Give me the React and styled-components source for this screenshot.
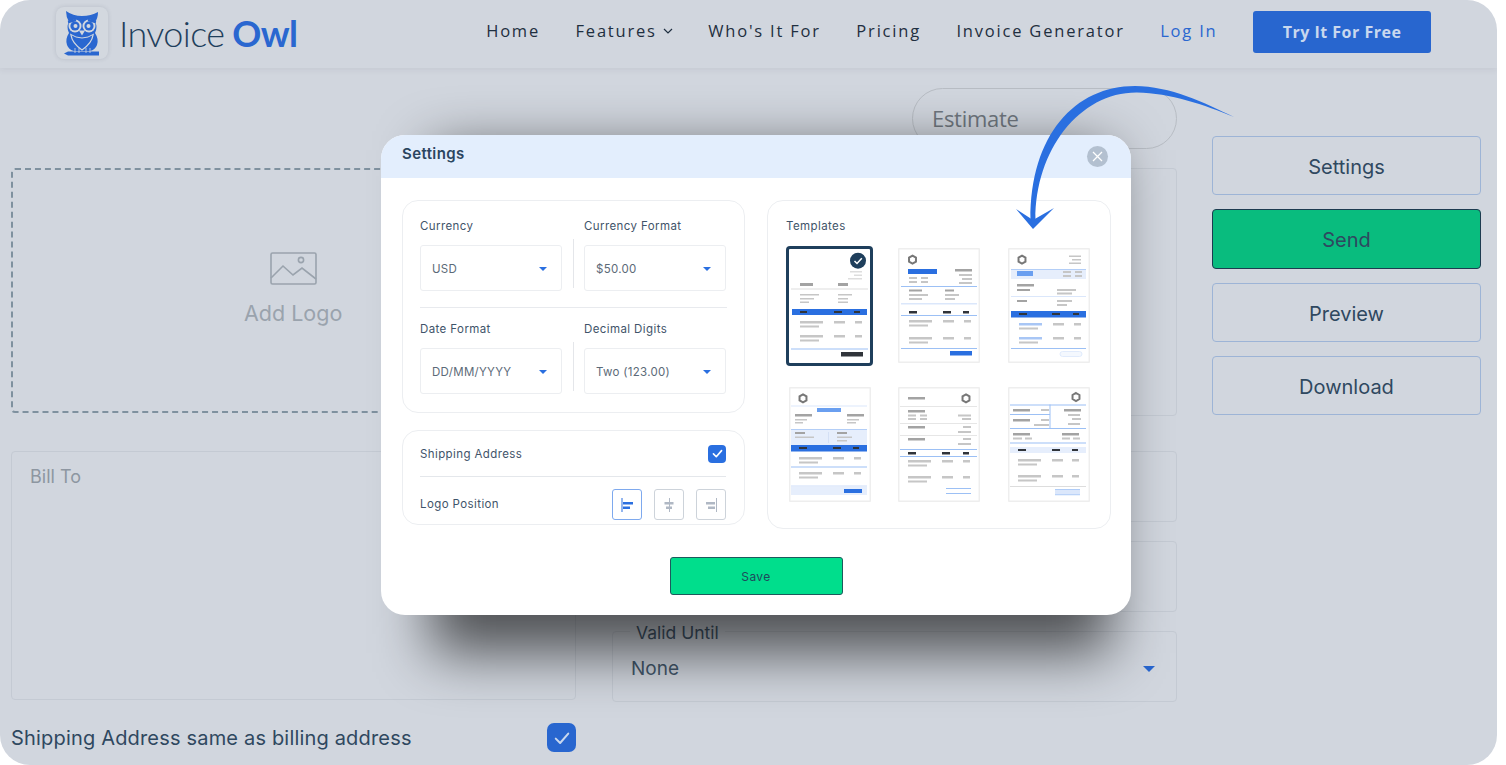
import React from 'react';
import styled, { createGlobalStyle } from 'styled-components';

const GlobalStyle = createGlobalStyle`
    html, body {
        margin: 0;
        background: #fff;
        overflow: hidden;
    }
    * {
        box-sizing: border-box;
    }
`;

const Frame = styled.div`
    position: relative;
    width: 1497px;
    height: 765px;
    background: #d1d6de;
    border-radius: 30px;
    overflow: hidden;
    font-family: Inter, 'Noto Sans', sans-serif;
    color: #2f4860;
`;

const Header = styled.header`
    height: 68px;
    display: flex;
    align-items: center;
    justify-content: space-between;
    padding: 0 66px 4px 56px;
    box-shadow: 0 2px 6px rgba(60, 70, 90, 0.08);
`;

const Brand = styled.div`
    display: flex;
    align-items: center;
    gap: 11px;
    margin-top: 1px;
`;

const LogoBox = styled.div`
    width: 52px;
    height: 52px;
    border-radius: 8px;
    background: #d3d8df;
    box-shadow: 0 0 4px rgba(60, 70, 90, 0.16);
`;

const BrandName = styled.div`
    font-family: Lato, sans-serif;
    font-size: 36px;
    font-weight: 300;
    letter-spacing: -0.6px;
    word-spacing: -1.5px;
    color: #1f3f5c;
    b {
        font-weight: 700;
        color: #2a67d0;
    }
`;

const Nav = styled.nav`
    display: flex;
    align-items: center;
    gap: 35.5px;
`;

const NavLink = styled.a`
    display: flex;
    align-items: center;
    gap: 6px;
    padding-bottom: 3px;
    font-family: 'Open Sans', sans-serif;
    font-size: 16.5px;
    letter-spacing: 1.8px;
    color: ${(p) => (p.$accent ? '#2a67d0' : '#1f2f40')};
`;

const TryButton = styled.button`
    width: 178px;
    height: 42px;
    border: 0;
    border-radius: 3px;
    background: #2866cf;
    color: #c9d8ee;
    font-family: 'Open Sans', sans-serif;
    font-size: 16px;
    font-weight: 700;
    letter-spacing: 0.5px;
`;

const Columns = styled.main`
    display: grid;
    grid-template-columns: 566px 565px 269px;
    column-gap: 35px;
    padding-left: 11px;
`;

const Column = styled.section`
    display: flex;
    flex-direction: column;
    padding-top: ${(p) => p.$top}px;
    padding-right: ${(p) => p.$right || 0}px;
`;

const LogoDrop = styled.div`
    height: 245px;
    border: 2px dashed #7f919f;
    border-radius: 4px;
    margin-bottom: 38px;
    padding: 82px 0 0 231px;
    font-size: 21.5px;
    color: #9aa3ad;
    svg {
        display: block;
        margin: 0 0 15px 26px;
    }
`;

const BillTo = styled.div`
    height: 249px;
    border: 1px solid #c4cad3;
    border-radius: 4px;
    padding: 14px 18px;
    font-size: 18px;
    color: #8d96a1;
`;

const SameRow = styled.div`
    display: flex;
    align-items: center;
    justify-content: space-between;
    margin-top: 23px;
    font-size: 20px;
    letter-spacing: 0.18px;
`;

const BigCheck = styled.span`
    width: 29px;
    height: 29px;
    border-radius: 7px;
    background: #2866cf;
    display: flex;
    align-items: center;
    justify-content: center;
`;

const Pill = styled.div`
    align-self: flex-end;
    width: 265px;
    height: 61px;
    margin-bottom: 19px;
    border: 1px solid #b8bdc4;
    border-radius: 31px;
    padding: 0 20px 2px 19px;
    display: flex;
    align-items: center;
    font-family: 'Open Sans', sans-serif;
    font-size: 22px;
    letter-spacing: -0.3px;
    color: #6f767e;
`;

const Panel = styled.div`
    height: 248px;
    margin-bottom: 35px;
    border: 1px solid #c4cad3;
    border-radius: 4px;
`;

const Field = styled.div`
    position: relative;
    height: 71px;
    margin-bottom: ${(p) => p.$gap}px;
    border: 1px solid #c4cad3;
    border-radius: 4px;
    padding: 4px 21px 0 18px;
    display: flex;
    align-items: center;
    justify-content: space-between;
    font-size: 19px;
    color: #44586c;
`;

const FieldLabel = styled.span`
    position: absolute;
    left: 17px;
    top: -10px;
    padding: 0 6px;
    background: #d1d6de;
    font-size: 17.5px;
`;

const Caret = styled.span`
    width: 0;
    height: 0;
    border-left: ${(p) => p.$size}px solid transparent;
    border-right: ${(p) => p.$size}px solid transparent;
    border-top: ${(p) => p.$size}px solid ${(p) => p.$color};
`;

const Actions = styled.aside`
    display: flex;
    flex-direction: column;
    gap: 14px;
`;

const ActionButton = styled.button`
    height: 59.3px;
    padding-top: 4px;
    border-radius: 4px;
    border: 1px solid ${(p) => (p.$primary ? '#1d3b50' : '#9db4d6')};
    background: ${(p) => (p.$primary ? '#09bc7e' : 'transparent')};
    color: #2f4860;
    font-family: Inter, sans-serif;
    font-size: 20px;
`;

const ModalLayer = styled.div`
    position: absolute;
    left: 381px;
    top: 135px;
    width: 750px;
    height: 480px;
`;

const ModalShadow = styled.div`
    position: absolute;
    inset: 15px 20px -38px 50px;
    background: rgba(0, 0, 0, 0.62);
    filter: blur(28px);
`;

const Modal = styled.div`
    position: relative;
    height: 100%;
    background: #fff;
    border-radius: 24px;
    overflow: hidden;
`;

const ModalHeader = styled.div`
    height: 43px;
    background: #e3eefd;
    display: flex;
    align-items: center;
    justify-content: space-between;
    padding: 0 23px 6px 21px;
    font-size: 15px;
    font-weight: 600;
    letter-spacing: 0.4px;
    color: #2b4560;
`;

const CloseButton = styled.span`
    width: 21px;
    height: 21px;
    margin-top: 6px;
    border-radius: 50%;
    background: #b3c0d0;
    display: flex;
    align-items: center;
    justify-content: center;
`;

const ModalBody = styled.div`
    display: grid;
    grid-template-columns: 343px 344px;
    column-gap: 22px;
    padding: 22px 20px 0 21px;
`;

const Stack = styled.div`
    display: flex;
    flex-direction: column;
    gap: 17px;
`;

const Card = styled.div`
    height: ${(p) => p.$height}px;
    border: 1px solid #eceef1;
    border-radius: 16px;
    padding: ${(p) => p.$pad};
`;

const SelectRow = styled.div`
    display: grid;
    grid-template-columns: 142px 1px 142px;
    column-gap: 10.5px;
    padding-bottom: 16px;
    border-bottom: ${(p) => (p.$last ? '0' : '1px solid #e8eaee')};
    margin-bottom: 14px;
`;

const Divider = styled.div`
    background: #e4e6ea;
    height: 49px;
    margin-top: 20px;
`;

const SelectLabel = styled.div`
    font-size: 11.5px;
    letter-spacing: 0.4px;
    line-height: 14px;
    color: #3f546a;
    margin-bottom: 12px;
`;

const SelectBox = styled.div`
    height: 46px;
    border: 1px solid #eceef1;
    border-radius: 3px;
    padding: 2px 14px 0 11px;
    display: flex;
    align-items: center;
    justify-content: space-between;
    font-size: 11.5px;
    letter-spacing: 0.3px;
    color: #5c6a78;
`;

const OptionRow = styled.div`
    display: flex;
    align-items: center;
    justify-content: space-between;
    height: ${(p) => p.$height}px;
    font-size: 11.5px;
    letter-spacing: 0.4px;
    color: #3f546a;
    border-bottom: ${(p) => (p.$line ? '1px solid #e4e7eb' : '0')};
`;

const SmallCheck = styled.span`
    width: 18px;
    height: 18px;
    border-radius: 4px;
    background: #2a6fe0;
    display: flex;
    align-items: center;
    justify-content: center;
`;

const PositionGroup = styled.div`
    display: flex;
    gap: 12px;
`;

const PositionButton = styled.span`
    width: 30px;
    height: 31px;
    border-radius: 3px;
    border: 1px solid ${(p) => (p.$active ? '#7ea9ee' : '#cdd3da')};
    svg {
        display: block;
    }
`;

const TemplatesTitle = styled.div`
    font-size: 11.5px;
    letter-spacing: 0.4px;
    color: #3f546a;
    margin-bottom: 13px;
`;

const TemplateGrid = styled.div`
    display: grid;
    grid-template-columns: 112px 110px 81px;
    grid-template-rows: 122px 112px;
    row-gap: 19px;
`;

const Thumb = styled.div`
    width: ${(p) => (p.$selected ? 87 : 82)}px;
    height: ${(p) => (p.$selected ? 120 : 115)}px;
    border-radius: ${(p) => (p.$selected ? 4 : 1)}px;
    background: #fff;
    box-shadow: inset 0 0 0 ${(p) => (p.$selected ? '3px #1f3f5c' : '1.5px #eeeeee')};
    margin-top: ${(p) => (p.$offsetTop ? 2 : 0)}px;
    margin-left: ${(p) => (p.$offsetLeft ? 3 : 0)}px;
    svg {
        display: block;
        filter: blur(0.35px);
    }
`;

const ModalFooter = styled.div`
    display: flex;
    justify-content: center;
    padding-top: 28px;
`;

const SaveButton = styled.button`
    width: 173px;
    height: 38px;
    padding-top: 2px;
    border: 1px solid #1d5a5c;
    border-radius: 3px;
    background: #00de8c;
    color: #1f4a5c;
    font-family: Inter, sans-serif;
    font-size: 12px;
    letter-spacing: 0.4px;
`;

const CurveArrow = styled.svg`
    position: absolute;
    left: 1000px;
    top: 70px;
`;

const BLUE = '#2a6fe0';
const SOFT = '#6a9ff0';
const LINE = '#9cc0f5';
const PALE = '#dbe7fb';
const BAND = '#e6eefc';
const DARK = '#30343a';
const G1 = '#a3a3a3';
const G2 = '#c6c6c6';
const G3 = '#dddddd';

const tableRows = (x, col2, col3, c1 = G2, ys = [72, 89]) =>
    ys.flatMap((y) => [
        [x, y, 23, 2.5, c1],
        [x, y + 4.5, 19, 2, G2],
        [col2, y, 11, 2.5, G2],
        [col3, y, 7, 2.5, G2],
    ]);

const TEMPLATES = [
    {
        selected: true,
        rects: [
            [64, 25, 12, 1.5, G3], [68, 28.5, 8, 1.5, G3], [62, 32, 14, 1.5, G3],
            [14, 37, 13, 3, G1], [52, 37, 10, 3, G1],
            [5, 42.5, 77, 1, G3],
            [14, 48, 19, 1.5, G2], [52, 48, 14, 1.5, G2],
            [14, 52, 14, 1.5, G2], [52, 52, 10, 1.5, G2],
            [14, 55.5, 9, 1.5, G2], [52, 55.5, 10, 1.5, G2],
            [6, 63, 75, 6, BLUE], [14, 65, 7, 2, DARK], [48, 65, 8, 2, DARK], [68, 65, 6, 2, DARK],
            ...tableRows(14, 48, 69, G2, [75, 89]),
            [5, 102.5, 77, 1, LINE],
            [55, 106, 22, 4.5, DARK],
        ],
    },
    {
        hex: [14.5, 11.7],
        rects: [
            [10, 21, 29, 5, BLUE], [57, 21, 17, 2.5, G1],
            [61, 26, 13, 2, G2], [64, 30, 10, 2, G2], [61, 34, 13, 2, G2],
            [11, 29, 8, 2, G2], [23, 29, 7, 2, G2], [11, 33, 8, 2, G2], [23, 33, 7, 2, G2],
            [3, 38, 76, 1, LINE],
            [11, 41.5, 13, 2, G1], [47, 41.5, 9, 2, G1],
            [11, 46, 19, 2, G2], [47, 46, 14, 2, G2],
            [11, 50, 13, 2, G2], [47, 50, 10, 2, G2],
            [3, 55, 76, 1.5, PALE],
            [11, 63, 8, 2.5, DARK], [45, 63, 8, 2.5, DARK], [65, 63, 6, 2.5, DARK],
            [3, 67, 76, 1, LINE],
            ...tableRows(11, 45, 66),
            [3, 100, 76, 1, LINE],
            [52, 103, 22, 4.5, BLUE],
        ],
    },
    {
        hex: [14, 11.7],
        rects: [
            [61, 7.5, 12, 1.5, G2], [64, 11, 9, 1.5, G2], [61, 14.5, 12, 1.5, G2],
            [3, 21, 75, 10, BAND], [3, 21, 75, 0.7, LINE],
            [9, 23, 16, 5, SOFT],
            [55, 23, 8, 2, G2], [67, 23, 7, 2, G2], [55, 27, 8, 2, G2], [67, 27, 7, 2, G2],
            [9, 36, 17, 2.5, G1], [9, 41, 13, 2, G1],
            [49, 41, 19, 2, G2], [49, 44.5, 15, 2, G2],
            [3, 48, 75, 1, PALE],
            [9, 52, 10, 2, G1], [49, 52, 15, 2, G2], [49, 56, 10, 2, G2],
            [3, 63, 75, 6.5, BLUE], [11, 65, 8, 2, DARK], [44, 65, 8, 2, DARK], [65, 65, 6, 2, DARK],
            ...tableRows(11, 45, 66, '#a8c6f5', [75, 89]),
            [3, 100, 75, 1, LINE],
        ],
        extra: <rect x="52" y="103.5" width="22" height="5" rx="2.5" fill="#f4f8fe" stroke={PALE} strokeWidth="0.8" />,
    },
    {
        hex: [14, 11.3],
        offsetLeft: true,
        rects: [
            [2, 18.5, 76, 1, PALE], [28, 21, 24, 4, SOFT],
            [6, 27, 17, 2.5, G1], [58, 27, 17, 2.5, G1],
            [6, 32, 12, 1.5, G2], [58, 32, 12, 1.5, G2],
            [6, 35, 8, 1.5, G2], [58, 35, 9, 1.5, G2],
            [2, 42, 76, 16, BAND], [2, 42, 76, 0.7, LINE],
            [6, 45, 10, 2, G1], [48, 45, 10, 2, G1],
            [6, 49.5, 19, 1.5, G2], [48, 49.5, 15, 1.5, G2], [48, 53, 10, 1.5, G2],
            [39, 45, 0.6, 11, '#c8d8f0'],
            [2, 58, 76, 6.5, BLUE], [10, 60, 8, 2, DARK], [44, 60, 8, 2, DARK], [64, 60, 6, 2, DARK],
            ...tableRows(10, 44, 65, G2, [70, 85]),
            [2, 79.5, 76, 1, LINE],
            [2, 98.5, 76, 9.5, BAND], [2, 98.5, 76, 0.7, PALE], [55, 102, 18, 4, BLUE],
        ],
    },
    {
        hex: [68, 11.3],
        rects: [
            [10, 10, 17, 2.5, G1],
            [2, 19, 77, 1, '#e6e6e6'],
            [10, 23, 17, 2.5, G1], [10, 27.5, 8, 2, G2], [22, 27.5, 7, 2, G2], [10, 31, 8, 2, G2], [22, 31, 7, 2, G2],
            [60, 27.5, 13, 2, G2], [64, 31, 9, 2, G2],
            [2, 36, 77, 1, '#e6e6e6'],
            [10, 39, 17, 2.5, G1], [65, 39, 8, 2, G2], [60, 44, 13, 2, G2],
            [2, 48, 77, 1, '#e6e6e6'],
            [10, 51, 17, 2.5, G1], [65, 51, 8, 2, G2], [60, 56, 13, 2, G2],
            [2, 62, 77, 1, LINE],
            [10, 65, 8, 2.5, DARK], [44, 65, 8, 2.5, DARK], [65, 65, 6, 2.5, DARK],
            [2, 69, 77, 1, LINE],
            ...tableRows(10, 44, 65, G2, [73, 89]),
            [48, 101, 25, 1, LINE], [48, 106, 25, 1, LINE],
        ],
    },
    {
        hex: [68, 10],
        rects: [
            [2, 17.5, 76, 1, LINE], [41.5, 17.5, 1, 24, LINE], [2, 27, 40, 1, LINE], [2, 41, 76, 1, LINE], [2, 55.5, 76, 1, LINE],
            [5, 22, 17, 2.5, G1], [33, 22, 8, 2, G2], [56, 22, 17, 2.5, G1],
            [60, 27, 12, 2, G2], [64, 31, 9, 2, G2], [60, 36, 12, 2, G2],
            [5, 32, 17, 2.5, G1], [33, 32, 8, 2, G2], [26, 37, 15, 2, G2],
            [5, 46, 17, 2.5, G1], [54, 46, 17, 2.5, G1],
            [5, 50.5, 9, 2, G2], [17, 50.5, 7, 2, G2], [54, 50.5, 8, 2, G2], [65, 50.5, 7, 2, G2],
            [2, 60, 76, 6, BAND], [10, 62, 8, 2, DARK], [44, 62, 8, 2, DARK], [64, 62, 6, 2, DARK],
            ...tableRows(10, 44, 64, G2, [72, 88]),
            [2, 99, 76, 1, G3],
            [47, 102, 25, 6, PALE], [47, 102, 25, 0.7, LINE], [47, 107.5, 25, 0.7, LINE],
        ],
    },
];

const OwlLogo = () => (
    <svg width="52" height="52" viewBox="0 0 52 52">
        <path d="M10 4Q17 9 26 9Q35 9 42 5Q42 11 39 15Q42 20 39 26Q43 32 41 38Q39 43 34 44H18Q13 43 11 38Q9 32 13 26Q10 20 13 15Q10 10 10 4Z" fill="#2a67d0" />
        <circle cx="19" cy="19" r="6.5" fill="#d3d8df" />
        <circle cx="33" cy="19" r="6.5" fill="#d3d8df" />
        <circle cx="19" cy="19" r="4.6" fill="#2a67d0" />
        <circle cx="33" cy="19" r="4.6" fill="#2a67d0" />
        <circle cx="19.5" cy="19" r="2" fill="#d3d8df" />
        <circle cx="32.5" cy="19" r="2" fill="#d3d8df" />
        <path d="M12 15L20 13M40 15L32 13" stroke="#2a67d0" strokeWidth="2.4" />
        <path d="M23 23.5L29 23.5L26 28.5Z" fill="#d3d8df" />
        <path d="M15 28Q16 36 26 43Q36 36 37 28" fill="none" stroke="#d3d8df" strokeWidth="1.3" />
        <path d="M14 27Q26 35 38 27" fill="none" stroke="#d3d8df" strokeWidth="1" />
        <path d="M8 46.5L12 44.5H43V48.5H12Z" fill="#2a67d0" />
        <path d="M19 41V46M23 41V46M30 41V46M34 41V46" stroke="#d3d8df" strokeWidth="0.8" />
    </svg>
);

const ImageIcon = () => (
    <svg width="47" height="33" viewBox="0 0 47 33" fill="none" stroke="#9aa3ad" strokeWidth="1.6">
        <rect x="1" y="1" width="45" height="31" rx="1.5" />
        <path d="M1 26L13 14L23 23L32 16L46 27" />
        <circle cx="31" cy="8" r="2.6" />
    </svg>
);

const CheckMark = ({ size, color = '#fff', width = 2 }) => (
    <svg width={size} height={size} viewBox="0 0 16 16" fill="none" stroke={color} strokeWidth={width} strokeLinecap="round" strokeLinejoin="round">
        <path d="M3 8.5L6.5 12L13 4.5" />
    </svg>
);

const Chevron = () => (
    <svg width="10" height="6" viewBox="0 0 10 6" fill="none" stroke="#1f2f40" strokeWidth="1.2">
        <path d="M1 1L5 5L9 1" />
    </svg>
);

const CloseIcon = () => (
    <svg width="11" height="11" viewBox="0 0 11 11" stroke="#fff" strokeWidth="1.3">
        <path d="M1 1L10 10M10 1L1 10" />
    </svg>
);

const AlignIcon = ({ line, bars, color }) => (
    <svg width="28" height="29" viewBox="0 0 28 29">
        <rect x={line} y="8" width="1" height="14" fill={color} />
        <rect x={bars[0]} y="12" width={bars[1]} height="2.5" fill={color} />
        <rect x={bars[2]} y="16.5" width={bars[3]} height="2.5" fill={color} />
    </svg>
);

const Select = ({ label, value }) => (
    <div>
        <SelectLabel>{label}</SelectLabel>
        <SelectBox>
            {value}
            <Caret $size={4} $color={BLUE} />
        </SelectBox>
    </div>
);

const TemplateThumb = ({ template, offsetTop }) => {
    const w = template.selected ? 87 : 82;
    const h = template.selected ? 120 : 115;
    return (
        <Thumb $selected={template.selected} $offsetTop={offsetTop} $offsetLeft={template.offsetLeft}>
            <svg width={w} height={h} viewBox={`0 0 ${w} ${h}`}>
                {template.hex && (
                    <polygon
                        points={[0, 60, 120, 180, 240, 300]
                            .map((a) => {
                                const r = (a * Math.PI) / 180;
                                return `${template.hex[0] + 4 * Math.sin(r)},${template.hex[1] - 4 * Math.cos(r)}`;
                            })
                            .join(' ')}
                        fill="none"
                        stroke="#777"
                        strokeWidth="2"
                    />
                )}
                {template.rects.map(([x, y, rw, rh, c], i) => (
                    <rect key={i} x={x} y={y} width={rw} height={rh} fill={c} />
                ))}
                {template.extra}
                {template.selected && (
                    <g>
                        <circle cx="72" cy="14.7" r="8" fill="#1f3f5c" />
                        <path d="M68.5 15L71 17.5L75.8 12.2" fill="none" stroke="#fff" strokeWidth="1.5" />
                    </g>
                )}
            </svg>
        </Thumb>
    );
};

function App() {
    return (
        <Frame>
            <GlobalStyle />
            <Header>
                <Brand>
                    <LogoBox>
                        <OwlLogo />
                    </LogoBox>
                    <BrandName>Invoice <b>Owl</b></BrandName>
                </Brand>
                <Nav>
                    <NavLink>Home</NavLink>
                    <NavLink>Features <Chevron /></NavLink>
                    <NavLink>Who's It For</NavLink>
                    <NavLink>Pricing</NavLink>
                    <NavLink>Invoice Generator</NavLink>
                    <NavLink $accent>Log In</NavLink>
                    <TryButton>Try It For Free</TryButton>
                </Nav>
            </Header>
            <Columns>
                <Column $top={100} $right={1}>
                    <LogoDrop>
                        <ImageIcon />
                        Add Logo
                    </LogoDrop>
                    <BillTo>Bill To</BillTo>
                    <SameRow>
                        Shipping Address same as billing address
                        <BigCheck><CheckMark size={20} color="#c9d8ee" width={1.6} /></BigCheck>
                    </SameRow>
                </Column>
                <Column $top={20}>
                    <Pill>Estimate</Pill>
                    <Panel />
                    <Field $gap={19} />
                    <Field $gap={19} />
                    <Field $gap={0}>
                        <FieldLabel>Valid Until</FieldLabel>
                        None
                        <Caret $size={6} $color="#2866cf" />
                    </Field>
                </Column>
                <Column $top={68}>
                    <Actions>
                        <ActionButton>Settings</ActionButton>
                        <ActionButton $primary>Send</ActionButton>
                        <ActionButton>Preview</ActionButton>
                        <ActionButton>Download</ActionButton>
                    </Actions>
                </Column>
            </Columns>
            <ModalLayer>
                <ModalShadow />
                <Modal>
                    <ModalHeader>
                        Settings
                        <CloseButton><CloseIcon /></CloseButton>
                    </ModalHeader>
                    <ModalBody>
                        <Stack>
                            <Card $height={213} $pad="18px 17px 0">
                                <SelectRow>
                                    <Select label="Currency" value="USD" />
                                    <Divider />
                                    <Select label="Currency Format" value="$50.00" />
                                </SelectRow>
                                <SelectRow $last>
                                    <Select label="Date Format" value="DD/MM/YYYY" />
                                    <Divider />
                                    <Select label="Decimal Digits" value="Two (123.00)" />
                                </SelectRow>
                            </Card>
                            <Card $height={95} $pad="0 18px 0 17px">
                                <OptionRow $height={46} $line>
                                    Shipping Address
                                    <SmallCheck><CheckMark size={13} /></SmallCheck>
                                </OptionRow>
                                <OptionRow $height={54}>
                                    Logo Position
                                    <PositionGroup>
                                        <PositionButton $active>
                                            <AlignIcon line={8.5} bars={[10, 10, 10, 7]} color={BLUE} />
                                        </PositionButton>
                                        <PositionButton>
                                            <AlignIcon line={14} bars={[9.5, 9, 11, 6]} color="#b0b8c4" />
                                        </PositionButton>
                                        <PositionButton>
                                            <AlignIcon line={19} bars={[9, 9, 11, 7]} color="#b0b8c4" />
                                        </PositionButton>
                                    </PositionGroup>
                                </OptionRow>
                            </Card>
                        </Stack>
                        <Card $height={329} $pad="18px 0 0 18px">
                            <TemplatesTitle>Templates</TemplatesTitle>
                            <TemplateGrid>
                                {TEMPLATES.map((t, i) => (
                                    <TemplateThumb key={i} template={t} offsetTop={i === 1 || i === 2} />
                                ))}
                            </TemplateGrid>
                        </Card>
                    </ModalBody>
                    <ModalFooter>
                        <SaveButton>Save</SaveButton>
                    </ModalFooter>
                </Modal>
            </ModalLayer>
            <CurveArrow width="250" height="170" viewBox="1000 70 250 170">
                <path d="M1234 117C1205 103 1170 86 1135 86C1075 86 1030 135 1030.5 220L1035.5 220C1035 150 1080 92 1137 92.5C1170 93 1205 105 1234 117Z" fill={BLUE} />
                <path d="M1033 229L1016 209L1033 220L1054 208Z" fill={BLUE} />
            </CurveArrow>
        </Frame>
    );
}

export default App;
